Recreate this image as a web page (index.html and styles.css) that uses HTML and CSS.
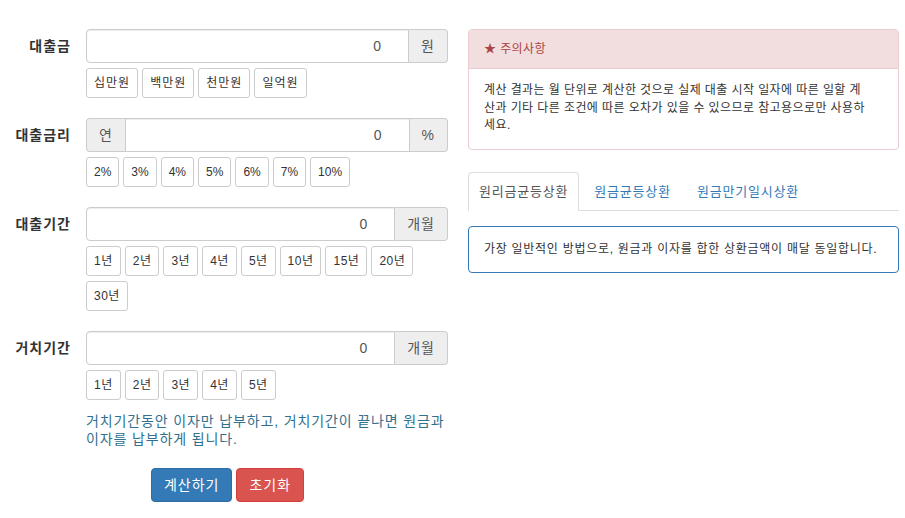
FILE: index.html
```html
<!DOCTYPE html>
<html lang="ko">
    <head>
        <meta charset="utf-8">
        <title>대출 이자 계산기</title>
        <link rel="stylesheet" href="styles.css">
    </head>
    <body>
        <div class="page">
            <form class="calc">
                <div class="field">
                    <label class="field-label">대출금</label>
                    <div class="field-body">
                        <div class="input-group">
                            <input class="input" type="text" value="0">
                            <span class="addon addon-right">원</span>
                        </div>
                        <div class="quick quick-amount">
                            <button type="button" class="btn-sm">십만원</button>
                            <button type="button" class="btn-sm">백만원</button>
                            <button type="button" class="btn-sm">천만원</button>
                            <button type="button" class="btn-sm">일억원</button>
                        </div>
                    </div>
                </div>

                <div class="field">
                    <label class="field-label">대출금리</label>
                    <div class="field-body">
                        <div class="input-group">
                            <span class="addon addon-left">연</span>
                            <input class="input input-mid" type="text" value="0">
                            <span class="addon addon-right">%</span>
                        </div>
                        <div class="quick quick-rate">
                            <button type="button" class="btn-sm">2%</button>
                            <button type="button" class="btn-sm">3%</button>
                            <button type="button" class="btn-sm">4%</button>
                            <button type="button" class="btn-sm">5%</button>
                            <button type="button" class="btn-sm">6%</button>
                            <button type="button" class="btn-sm">7%</button>
                            <button type="button" class="btn-sm">10%</button>
                        </div>
                    </div>
                </div>

                <div class="field">
                    <label class="field-label">대출기간</label>
                    <div class="field-body">
                        <div class="input-group">
                            <input class="input" type="text" value="0">
                            <span class="addon addon-right">개월</span>
                        </div>
                        <div class="quick">
                            <button type="button" class="btn-sm">1년</button>
                            <button type="button" class="btn-sm">2년</button>
                            <button type="button" class="btn-sm">3년</button>
                            <button type="button" class="btn-sm">4년</button>
                            <button type="button" class="btn-sm">5년</button>
                            <button type="button" class="btn-sm">10년</button>
                            <button type="button" class="btn-sm">15년</button>
                            <button type="button" class="btn-sm">20년</button>
                            <button type="button" class="btn-sm">30년</button>
                        </div>
                    </div>
                </div>

                <div class="field">
                    <label class="field-label">거치기간</label>
                    <div class="field-body">
                        <div class="input-group">
                            <input class="input" type="text" value="0">
                            <span class="addon addon-right">개월</span>
                        </div>
                        <div class="quick">
                            <button type="button" class="btn-sm">1년</button>
                            <button type="button" class="btn-sm">2년</button>
                            <button type="button" class="btn-sm">3년</button>
                            <button type="button" class="btn-sm">4년</button>
                            <button type="button" class="btn-sm">5년</button>
                        </div>
                        <p class="help">거치기간동안 이자만 납부하고, 거치기간이 끝나면 원금과<br>이자를 납부하게 됩니다.</p>
                    </div>
                </div>

                <div class="actions">
                    <button type="button" class="btn btn-primary">계산하기</button>
                    <button type="button" class="btn btn-danger">초기화</button>
                </div>
            </form>

            <div class="side">
                <div class="panel">
                    <div class="panel-heading">★ 주의사항</div>
                    <div class="panel-body">
                        계산 결과는 월 단위로 계산한 것으로 실제 대출 시작 일자에 따른 일할 계<br>산과 기타 다른 조건에 따른 오차가 있을 수 있으므로 참고용으로만 사용하<br>세요.
                    </div>
                </div>

                <ul class="tabs">
                    <li><a class="tab active" href="#">원리금균등상환</a></li>
                    <li><a class="tab" href="#">원금균등상환</a></li>
                    <li><a class="tab" href="#">원금만기일시상환</a></li>
                </ul>
                <div class="tab-box">가장 일반적인 방법으로, 원금과 이자를 합한 상환금액이 매달 동일합니다.</div>
            </div>
        </div>
    </body>
</html>
```

FILE: styles.css
```css
body {
    margin: 0;
    font-family: "Liberation Sans", "Noto Sans CJK KR", sans-serif;
    font-size: 14px;
    color: #333;
    background: #fff;
}

.page {
    display: flex;
    align-items: flex-start;
    padding-top: 29px;
}

/** left: the form */
.calc {
    width: 455px;
}

.field {
    display: grid;
    grid-template-columns: 86px 362px;
    margin-bottom: 20px;
}

.field-label {
    height: 34px;
    line-height: 34px;
    padding-right: 15px;
    text-align: right;
    font-weight: bold;
    font-size: 14px;
    letter-spacing: 1px;
}

.input-group {
    display: flex;
    height: 34px;
}

.input {
    flex: 1;
    min-width: 0;
    box-sizing: border-box;
    height: 34px;
    margin: 0;
    padding: 6px 27px 6px 12px;
    border: 1px solid #ccc;
    border-radius: 4px 0 0 4px;
    font: inherit;
    font-size: 14px;
    color: #555;
    text-align: right;
    box-shadow: inset 0 1px 1px rgba(0, 0, 0, .075);
}

.input-mid {
    border-radius: 0;
}

.addon {
    box-sizing: border-box;
    height: 34px;
    padding: 6px 12px;
    line-height: 20px;
    background: #eee;
    border: 1px solid #ccc;
    color: #555;
    font-size: 14px;
    letter-spacing: 1px;
    text-align: center;
}

.addon-right {
    border-left: 0;
    border-radius: 0 4px 4px 0;
}

.addon-left {
    border-right: 0;
    border-radius: 4px 0 0 4px;
}

.quick {
    display: flex;
    flex-wrap: wrap;
    gap: 5px 4px;
    margin-top: 5px;
}

.btn-sm {
    height: 30px;
    margin: 0;
    padding: 5px 7px;
    border: 1px solid #ccc;
    border-radius: 3px;
    background: #fff;
    color: #333;
    font: inherit;
    font-size: 12px;
    line-height: 18px;
    letter-spacing: .5px;
}

.quick-amount .btn-sm {
    letter-spacing: 1px;
}

/** percent buttons hold no hangul */
.quick-rate .btn-sm {
    letter-spacing: 0;
}

.help {
    margin: 12px 0 0;
    line-height: 18px;
    color: #31708f;
    letter-spacing: .87px;
    white-space: nowrap;
}

.actions {
    display: flex;
    justify-content: center;
    gap: 4px;
    margin-top: 8px;
}

.btn {
    height: 34px;
    padding: 6px 12px;
    border: 1px solid transparent;
    border-radius: 4px;
    font: inherit;
    font-size: 14px;
    line-height: 20px;
    letter-spacing: 1px;
    color: #fff;
}

.btn-primary {
    background: #337ab7;
    border-color: #2e6da4;
}

.btn-danger {
    background: #d9534f;
    border-color: #d43f3a;
}

/** right: notice + tabs */
.side {
    width: 431px;
    margin-left: 13px;
}

.panel {
    border: 1px solid #ebccd1;
    border-radius: 4px;
    font-size: 12px;
    margin-bottom: 22px;
}

.panel-heading {
    padding: 10px 15px;
    line-height: 18px;
    background: #f2dede;
    color: #a94442;
    border-bottom: 1px solid #ebccd1;
    border-radius: 3px 3px 0 0;
    letter-spacing: .4px;
}

.panel-body {
    padding: 13px 15px 14px;
    line-height: 17.5px;
    letter-spacing: .41px;
    white-space: nowrap;
}

.tabs {
    display: flex;
    margin: 0;
    padding: 0;
    list-style: none;
    border-bottom: 1px solid #ddd;
}

.tabs li {
    margin-bottom: -1px;
}

.tab {
    display: block;
    margin-right: 4px;
    padding: 10px 10px;
    border: 1px solid transparent;
    border-radius: 4px 4px 0 0;
    font-size: 13px;
    line-height: 17px;
    letter-spacing: .8px;
    color: #337ab7;
    text-decoration: none;
}

.tab.active {
    color: #555;
    background: #fff;
    border-color: #ddd #ddd transparent;
}

.tab-box {
    margin-top: 15px;
    padding: 14px 15px;
    border: 1px solid #337ab7;
    border-radius: 4px;
    font-size: 12px;
    line-height: 17px;
    letter-spacing: .72px;
    white-space: nowrap;
}
```
